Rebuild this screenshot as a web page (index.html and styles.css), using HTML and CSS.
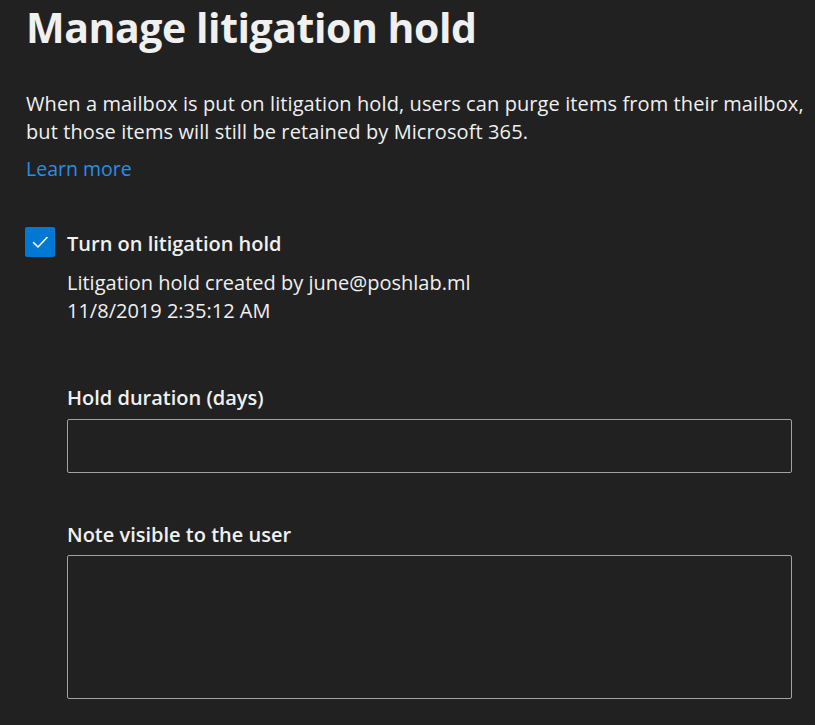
FILE: index.html
```html
<!DOCTYPE html>
<html lang="en">
<head>
<meta charset="utf-8">
<title>Manage litigation hold</title>
<link rel="stylesheet" href="styles.css">
</head>
<body>
<main class="panel">
  <h1 class="title">Manage litigation hold</h1>
  <p class="intro">When a mailbox is put on litigation hold, users can purge items from their mailbox,<br>but those items will still be retained by Microsoft 365.</p>
  <a class="link" href="#">Learn more</a>

  <div class="check-row">
    <span class="checkbox" role="checkbox" aria-checked="true">
      <svg viewBox="0 0 30 30" width="30" height="30" aria-hidden="true"><path d="M8.5 15.5 L13 20 L22 10.5" fill="none" stroke="#ffffff" stroke-width="1.6" stroke-linecap="round" stroke-linejoin="round"/></svg>
    </span>
    <div class="check-body">
      <div class="check-label">Turn on litigation hold</div>
      <div class="meta">Litigation hold created by june@poshlab.ml</div>
      <div class="meta">11/8/2019 2:35:12 AM</div>

      <label class="field-label" for="duration">Hold duration (days)</label>
      <input class="field-input" id="duration" type="text">

      <label class="field-label second" for="note">Note visible to the user</label>
      <textarea class="field-area" id="note"></textarea>
    </div>
  </div>
</main>
</body>
</html>
```

FILE: styles.css
```css
html, body {
  margin: 0;
  padding: 0;
  background: #212121;
}
body {
  font-family: "Open Sans", "Noto Sans", sans-serif;
  color: #f0f0f0;
  overflow: hidden;
}
.panel {
  padding: 0 9px 0 26px;
}
.title {
  margin: -1px 0 0;
  font-size: 41px;
  line-height: 56px;
  font-weight: 700;
  color: #f0f0f0;
  letter-spacing: -0.45px;
}
.intro {
  margin: 35px 0 0;
  font-size: 20px;
  line-height: 28px;
  letter-spacing: 0.1px;
  white-space: nowrap;
}
.link {
  display: block;
  margin-top: 9px;
  font-size: 19.5px;
  line-height: 28px;
  color: #2b8ee0;
  text-decoration: none;
}
.check-row {
  display: flex;
  gap: 12px;
  margin-top: 44px;
}
.checkbox {
  flex: none;
  width: 30px;
  height: 30px;
  margin-left: -1px;
  border-radius: 2px;
  background: #0078d4;
  display: flex;
}
.check-body {
  flex: 1;
  display: flex;
  flex-direction: column;
  margin-top: 3px;
}
.check-label {
  font-size: 20px;
  line-height: 28px;
  font-weight: 600;
}
.meta {
  font-size: 20px;
  line-height: 28px;
}
.check-label + .meta {
  margin-top: 11px;
}
.field-label {
  display: block;
  margin-top: 59px;
  font-size: 20px;
  line-height: 28px;
  font-weight: 600;
}
.field-label.second {
  margin-top: 48px;
}
.field-input,
.field-area {
  display: block;
  box-sizing: border-box;
  width: 725px;
  margin: 7px 0 0;
  background: transparent;
  border: 1px solid #a3a3a3;
  border-radius: 2px;
  color: #f0f0f0;
  font: inherit;
  outline: none;
}
.field-input {
  height: 54px;
}
.field-area {
  height: 144px;
  margin-top: 6px;
  resize: none;
}
```
